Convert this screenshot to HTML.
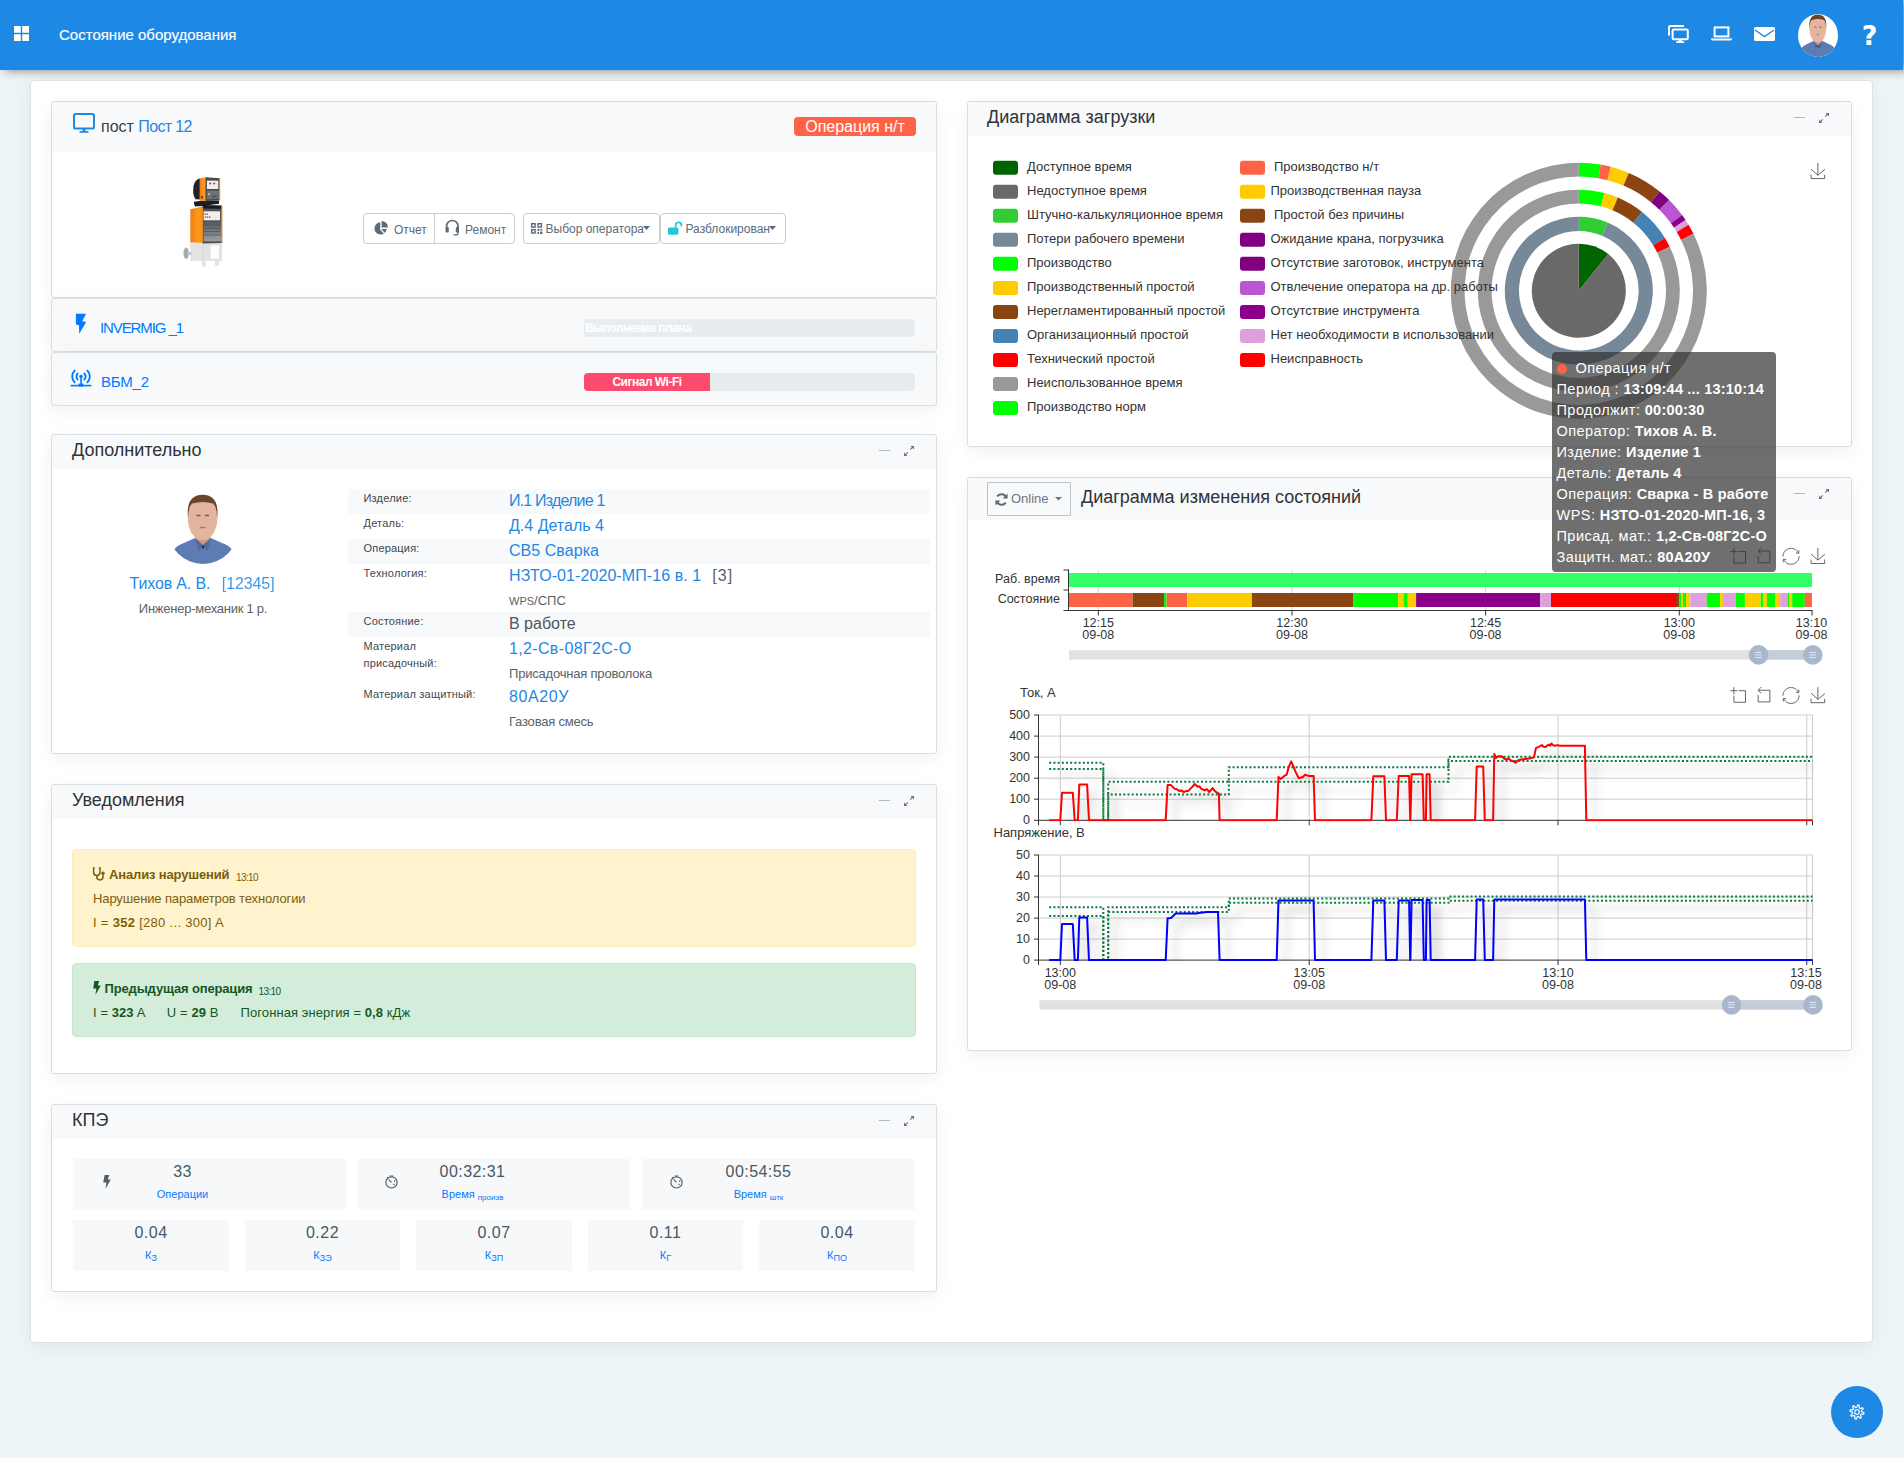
<!DOCTYPE html>
<html lang="ru"><head><meta charset="utf-8"><title>Состояние оборудования</title>
<style>
*{box-sizing:border-box;margin:0;padding:0}
html,body{width:1904px;height:1458px;overflow:hidden}
body{background:#eef5f9;font-family:"Liberation Sans",sans-serif;color:#54667a;font-size:13px;position:relative}
.abs,.abs *{position:absolute}
#hdr{position:absolute;left:0;top:0;width:1903px;height:70px;background:#1e88e5;box-shadow:5px 0 10px rgba(0,0,0,.5)}
#hdr .ttl{position:absolute;left:59px;top:25px;font-size:15px;line-height:20px;color:#fff;white-space:nowrap;-webkit-text-stroke:.15px #fff}
#wrap{position:absolute;left:30px;top:80px;width:1843px;height:1263px;background:#fff;border:1px solid #dbe3e8;border-radius:4px;box-shadow:0 4px 20px rgba(0,0,0,.06)}
.card{position:absolute;background:#fff;border:1px solid #d7dfe3;border-radius:3px;box-shadow:0 5px 18px rgba(0,0,0,.06)}
.card .ch{position:absolute;left:0;top:0;right:0;background:#f7f9fb;border-radius:3px 3px 0 0}
.card .ct{position:absolute;font-size:18px;line-height:22px;color:#2f3336;white-space:nowrap}
.t{position:absolute;white-space:nowrap}
a,.lnk{color:#007bff;text-decoration:none}
.ctl{position:absolute;top:0;right:0}
svg{position:absolute;overflow:visible}
.btn{position:absolute;top:213px;height:31px;border:1px solid #ccc;background:#fff;border-radius:4px;font-size:12px;color:#54667a}
.lbl{position:absolute;left:363px;font-size:12px;line-height:17px;color:#3a3f44}
.val{position:absolute;left:509px;font-size:16px;line-height:20px;white-space:nowrap}
.sub{position:absolute;left:509px;font-size:13px;line-height:16px;color:#5a6268;white-space:nowrap}
.stripe{position:absolute;left:348px;width:582px;height:25px;background:#f8f9fa}
.kbox{position:absolute;background:#f7f8fa}
.kv{position:absolute;left:0;right:0;text-align:center;font-size:16px;line-height:20px;color:#4a5560}
.kl{color:#007bff}
.kl sub{font-size:8px;vertical-align:baseline;position:relative;top:2px}
.ec{font-family:"Liberation Sans",sans-serif;font-size:12px;fill:#333}
</style></head><body>
<div id="hdr">
<svg style="left:14px;top:26px" width="15" height="15" viewBox="0 0 15 15"><path fill="#fff" d="M0 0h6.8v6.8H0zM8.2 0H15v6.8H8.2zM0 8.2h6.8V15H0zM8.2 8.2H15V15H8.2z"/></svg>
<div class="ttl">Состояние оборудования</div>
<svg style="left:1668px;top:25px" width="21" height="18" viewBox="0 0 21 18"><g fill="none" stroke="#fff" stroke-width="2"><path d="M1 10.5V2.2Q1 1 2.2 1H16"/><rect x="4.6" y="4.4" width="15.2" height="9.8" rx="1.2"/></g><path fill="#fff" d="M10.6 14.2h3.2v2h2.4v1.8H8.2v-1.8h2.4z"/></svg>
<svg style="left:1711px;top:26px" width="21" height="15" viewBox="0 0 21 15"><rect x="3.6" y="1.4" width="13.8" height="9" fill="none" stroke="#fff" stroke-width="2"/><path fill="#fff" d="M0 12.4h21v.6q0 1.6-1.8 1.6H1.8Q0 14.6 0 13z"/></svg>
<svg style="left:1754px;top:27px" width="21" height="14" viewBox="0 0 21 14"><rect x="0" y="0" width="21" height="14" rx="1.6" fill="#fff"/><path d="M1 3l9.5 6.6L20 3" fill="none" stroke="#1e88e5" stroke-width="1.3"/></svg>
<svg style="left:1798px;top:14px" width="40" height="43" viewBox="0 0 70 70" preserveAspectRatio="none"><defs><clipPath id="av1"><circle cx="35" cy="35" r="35"/></clipPath></defs><g clip-path="url(#av1)"><rect width="70" height="70" fill="#fff"/><path d="M0 70Q3 53 16 49L27 44l8 6 8-6 11 5Q67 53 70 70z" fill="#5c7cb3"/><path d="M27 36h15.5v9L35 53l-8-8z" fill="#cf9a82"/><ellipse cx="34.6" cy="24.5" rx="14.8" ry="21.8" fill="#e3b59e"/><path d="M20 24Q17.5 1 34.6 .8 51.7 1 49.2 24 48.6 12.5 45 9.6 35 6.6 24.2 9.6 20.6 12.5 20 24z" fill="#6a462d"/><path d="M28.5 21.500000000000004h4M37 21.500000000000004h4" stroke="#7a5a48" stroke-width="1.4"/><path d="M32 33.5h5.500000000000001" stroke="#b9736a" stroke-width="1.3"/><path d="M27 44l8 7-4.500000000000001 6zM43 44l-8 7 4.500000000000001 6z" fill="#4f6c9c"/><path d="M33.6 52.5l1.4 3 1.4-3-1.4-1.6z" fill="#232b45"/></g></svg>
<div class="t" style="left:1569.5px;width:600px;text-align:center;top:21.50px;font-size:27px;line-height:27px;color:#fff;font-weight:bold;font-family:'DejaVu Sans','Liberation Sans',sans-serif;">?</div>
</div>
<div id="wrap"></div>
<div class="card" style="left:51px;top:101px;width:886px;height:197px;"><div class="ch" style="height:50px"></div></div>
<svg style="left:73px;top:113px" width="22" height="20" viewBox="0 0 22 20"><rect x="1" y="1" width="20" height="14.6" rx="1.6" fill="none" stroke="#1e88e5" stroke-width="2"/><path fill="#1e88e5" d="M9.600000000000001 15.6h2.8v2.4h3v1.8H6.6v-1.8h3z"/></svg>
<div class="t" style="left:101px;top:118.50px;font-size:16px;line-height:16px;color:#3b3f44;">пост <span style="color:#1e88e5;letter-spacing:-.65px">Пост 12</span></div>
<div class="t" style="left:794px;top:117px;width:122px;height:19px;border-radius:4px;background:#ff6347"></div>
<div class="t" style="left:555px;width:600px;text-align:center;top:118.50px;font-size:16px;line-height:16px;color:#fff;">Операция н/т</div>
<svg style="left:0;top:0" width="260" height="280" viewBox="0 0 260 280">
<defs><linearGradient id="wg1" x1="0" x2="1"><stop offset="0" stop-color="#f07c10"/><stop offset=".6" stop-color="#fb9a1e"/><stop offset="1" stop-color="#f58a14"/></linearGradient><linearGradient id="wg2" x1="0" x2="0" y1="0" y2="1"><stop offset="0" stop-color="#54595d"/><stop offset="1" stop-color="#9a9fa3"/></linearGradient><filter id="wb" x="-5%" y="-5%" width="110%" height="110%"><feGaussianBlur stdDeviation=".35"/></filter></defs>
<g filter="url(#wb)">
<path d="M190.3 241.3h31.8v19.6h-3v4.2q-2.1 1.4-4.2 0v-4.2h-9.2v5.3q-2 1.4-3.900000000000001 0v-5.3H190.3z" fill="#e3e3e3"/>
<path d="M210.6 245.500000000000002h8.4v13.3h-8.4z" fill="#fdfdfd"/><path d="M203.2 242v18.6" stroke="#d3d3d3" stroke-width=".8"/>
<ellipse cx="186.2" cy="253.2" rx="2.7" ry="5.7" fill="#a9a9a9"/><path d="M187 253.5h4.500000000000001" stroke="#bdbdbd" stroke-width="2.4"/>
<path d="M190.3 209.2l13.3-2.9v36.8l-13.3-.9z" fill="url(#wg1)"/>
<path d="M202.9 205l19.2.6v37.4l-19.2.5z" fill="#4d5256"/><path d="M221.1 205.6h1.2v37h-1.2z" fill="#f5891a"/>
<path d="M203.6 205.3l17.5.5v3l-17.5-.3z" fill="#1c1d1f"/>
<path d="M203.6 211.3h16.4v9h-16.4z" fill="#f1f1f1"/><path d="M204.6 213.4h1.1v1.4h-1.1zM206.6 213.4h1.1v1.4h-1.1z" fill="#222"/><path d="M204.8 216.4h1.4v1.4h-1.4zM206.9 216.4h1.4v1.4h-1.4zM209 216.4h1.4v1.4h-1.4z" fill="#d11"/><path d="M213 215.5h5v3.5h-5z" fill="#f6e9c9"/>
<path d="M203.6 221.7h17.5v19.6h-17.5z" fill="url(#wg2)"/><path d="M204.2 225h16M204.2 228.3h16M204.2 231.6h16M204.2 234.9h16" stroke="#4b5054" stroke-width=".7"/><circle cx="217.6" cy="237.2" r="1.1" fill="#c9a23a"/>
<path d="M194 201.8q9-1.8 25-1.2v3.2l-13 1.8-2.3 2.400000000000001-1.4-2.1-7.300000000000001.5q-1.4-2.4-1-4.6z" fill="#1e1f21"/>
<path d="M193.2 190Q193 181.500000000000004 199 178.500000000000004l2 .5v20.5l-5.5-.2Q193 196 193.200000000000004 190z" fill="#222325"/>
<path d="M199.6 178.6l6.500000000000001-1.4v24l-6.500000000000001-.7z" fill="url(#wg1)"/><path d="M201.4 196h1.4v2.4h-1.4z" fill="#222"/>
<path d="M205.6 177.2l14.2 1v22l-14.2.8z" fill="#45494d"/><path d="M219 178.2l1.2.1v22l-1.2.1z" fill="#f5891a"/>
<path d="M206.9 180.6h11.4v8.4h-11.4z" fill="#eceef0"/><circle cx="210.2" cy="183.6" r="1" fill="#c22"/><circle cx="214.2" cy="183.6" r="1" fill="#c22"/>
<path d="M206.9 190.6h12v8.200000000000001l-12 .6z" fill="#6d7277"/><circle cx="208.9" cy="194" r="1.1" fill="#d9c07a"/><path d="M212 195.500000000000004h6" stroke="#b33" stroke-width=".9"/><path d="M212 196.9h4" stroke="#335" stroke-width=".7"/>
</g></svg>
<div class="btn" style="left:363px;width:152px"></div><div class="t" style="left:434px;top:214px;width:1px;height:29px;background:#ccc"></div>
<div class="btn" style="left:523px;width:137px"></div><div class="btn" style="left:660px;width:126px"></div>
<svg style="left:374px;top:221px" width="14" height="14" viewBox="0 0 14 14"><path fill="#5b6b7b" d="M6.3 1.2A6.2 6.2 0 1 0 12.8 8H6.3z"/><path fill="#5b6b7b" d="M7.6 0A6.3 6.3 0 0 1 14 6.6H7.6z"/><path d="M6.3 8l4.4 4.600000000000001" stroke="#fff" stroke-width="1.2"/></svg>
<div class="t" style="left:394px;top:224.00px;font-size:12px;line-height:12px;color:#5b6b7b;">Отчет</div>
<svg style="left:445px;top:219px" width="15" height="17" viewBox="0 0 15 17"><path d="M1.6 9.5V7.2a5.7 5.7 0 0 1 11.4 0v2.3" fill="none" stroke="#5b6b7b" stroke-width="1.7"/><rect x=".6" y="8" width="3.2" height="5.6" rx="1" fill="#5b6b7b"/><rect x="10.8" y="8" width="3.2" height="5.6" rx="1" fill="#5b6b7b"/><path d="M13 13v1.4q0 1.4-1.6 1.4H8.6" fill="none" stroke="#5b6b7b" stroke-width="1.3"/></svg>
<div class="t" style="left:465px;top:224.00px;font-size:12px;line-height:12px;color:#5b6b7b;">Ремонт</div>
<svg style="left:531px;top:223px" width="12" height="11" viewBox="0 0 12 11"><g fill="none" stroke="#5b6b7b" stroke-width="1.4"><rect x=".7" y=".7" width="3.4" height="3.4"/><rect x="7" y=".7" width="3.4" height="3.4"/><rect x=".7" y="6.6" width="3.4" height="3.4"/></g><path fill="#5b6b7b" d="M6.4 6h2v2h-2zM9.4 6h2v1.600000000000001h-2zM6.4 9h1.600000000000001v2H6.4zM9 8.6h2.400000000000001V11H9z"/></svg>
<div class="t" style="left:545.5px;top:223.00px;font-size:12px;line-height:12px;color:#5b6b7b;">Выбор оператора</div>
<svg style="left:643px;top:226px" width="7" height="4" viewBox="0 0 7 4"><path d="M0 0h7L3.5 4z" fill="#5b6b7b"/></svg>
<svg style="left:668px;top:221px" width="15" height="14" viewBox="0 0 15 14"><rect x="0" y="6.4" width="10.4" height="7.4" rx="1.2" fill="#26c6da"/><path d="M7.6 6.4V4.2a2.9 2.9 0 0 1 5.800000000000001 0V5.6" fill="none" stroke="#26c6da" stroke-width="1.7"/></svg>
<div class="t" style="left:685.5px;top:223.00px;font-size:12px;line-height:12px;color:#5b6b7b;">Разблокирован</div>
<svg style="left:769px;top:226px" width="7" height="4" viewBox="0 0 7 4"><path d="M0 0h7L3.5 4z" fill="#5b6b7b"/></svg>
<div class="card" style="left:51px;top:298px;width:886px;height:54px;background:#f7f9fb"></div>
<div class="card" style="left:51px;top:352px;width:886px;height:54px;background:#f7f9fb"></div>
<svg style="left:75px;top:313px" width="12" height="21" viewBox="0 0 12 21"><path fill="#007bff" d="M.9 .8H11.1L7.2 8.3l4 .7L4.2 20.8 4.05 12.3.9 11.6z"/></svg>
<div class="t" style="left:100px;top:320.00px;font-size:15px;line-height:15px;color:#007bff;letter-spacing:-1.1px;">INVERMIG _1</div>
<svg style="left:70px;top:368px" width="22" height="20" viewBox="0 0 22 20"><g fill="none" stroke="#007bff" stroke-width="1.9" stroke-linecap="round"><path d="M7.6 5.6a4.600000000000001 4.600000000000001 0 0 0 0 5.800000000000001M14.4 5.6a4.600000000000001 4.600000000000001 0 0 1 0 5.800000000000001M4.6 2.6a8.4 8.4 0 0 0 0 11.8M17.4 2.6a8.4 8.4 0 0 1 0 11.8"/></g><circle cx="11" cy="8.5" r="1.800000000000001" fill="#007bff"/><path d="M11 10v7" stroke="#007bff" stroke-width="1.6"/><rect x="8.6" y="15.600000000000001" width="4.8" height="3" fill="#007bff"/><path d="M.6 17.6h20.8" stroke="#007bff" stroke-width="1.6"/></svg>
<div class="t" style="left:101px;top:374.00px;font-size:15px;line-height:15px;color:#007bff;letter-spacing:-.25px;">ВБМ_2</div>
<div class="t" style="left:584px;top:319px;width:331px;height:18px;border-radius:4px;background:#e9ecef"></div>
<div class="t" style="left:585px;top:322.00px;font-size:12px;line-height:12px;color:#fff;font-weight:bold;letter-spacing:-.55px;">Выполнение плана</div>
<div class="t" style="left:584px;top:373px;width:331px;height:18px;border-radius:4px;background:#e9ecef"></div>
<div class="t" style="left:584px;top:373px;width:126px;height:18px;border-radius:4px 0 0 4px;background:#fc4b6c"></div>
<div class="t" style="left:347px;width:600px;text-align:center;top:376.00px;font-size:12px;line-height:12px;color:#fff;font-weight:bold;letter-spacing:-.5px;">Сигнал Wi-Fi</div>
<div class="card" style="left:51px;top:434px;width:886px;height:320px;"><div class="ch" style="height:34px"></div></div>
<div class="t" style="left:72px;top:441.00px;font-size:18px;line-height:18px;color:#2f3336;">Дополнительно</div>
<svg style="left:879px;top:444px" width="40" height="14" viewBox="0 0 40 14"><path d="M0 6.500000000000001h11" stroke="#b3b8bd" stroke-width="1" fill="none"/><path d="M31.2 5.7L34 2.9M28.8 8.3L26 11.1" stroke="#6c737a" stroke-width="1.1" fill="none"/><path d="M35 2v3.500000000000001L31.5 2zM25 12V8.5L28.5 12z" fill="#6c737a"/></svg>
<svg style="left:168px;top:494px" width="70" height="70" viewBox="0 0 70 70"><defs><clipPath id="av2"><circle cx="35" cy="35" r="35"/></clipPath></defs><g clip-path="url(#av2)"><rect width="70" height="70" fill="#fff"/><path d="M0 70Q3 53 16 49L27 44l8 6 8-6 11 5Q67 53 70 70z" fill="#5c7cb3"/><path d="M27 36h15.5v9L35 53l-8-8z" fill="#cf9a82"/><ellipse cx="34.6" cy="24.5" rx="14.8" ry="21.8" fill="#e3b59e"/><path d="M20 24Q17.5 1 34.6 .8 51.7 1 49.2 24 48.6 12.5 45 9.6 35 6.6 24.2 9.6 20.6 12.5 20 24z" fill="#6a462d"/><path d="M28.5 21.500000000000004h4M37 21.500000000000004h4" stroke="#7a5a48" stroke-width="1.4"/><path d="M32 33.5h5.500000000000001" stroke="#b9736a" stroke-width="1.3"/><path d="M27 44l8 7-4.500000000000001 6zM43 44l-8 7 4.500000000000001 6z" fill="#4f6c9c"/><path d="M33.6 52.5l1.4 3 1.4-3-1.4-1.6z" fill="#232b45"/></g></svg>
<div class="t" style="left:129.5px;top:575.50px;font-size:16px;line-height:16px;color:#1e88e5;letter-spacing:-.15px;">Тихов А. В.&nbsp; <span style="margin-left:3px;opacity:.85;letter-spacing:-.1px">[12345]</span></div>
<div class="t" style="left:-97px;width:600px;text-align:center;top:602.00px;font-size:13px;line-height:13px;color:#5a6268;letter-spacing:-.25px;">Инженер-механик 1 р.</div>
<div class="stripe" style="top:489px"></div>
<div class="stripe" style="top:539px"></div>
<div class="stripe" style="top:612px"></div>
<div class="t" style="left:363.5px;top:492.50px;font-size:11px;line-height:11px;color:#41474d;letter-spacing:.2px;">Изделие:</div>
<div class="t" style="left:363.5px;top:517.50px;font-size:11px;line-height:11px;color:#41474d;letter-spacing:.2px;">Деталь:</div>
<div class="t" style="left:363.5px;top:542.50px;font-size:11px;line-height:11px;color:#41474d;letter-spacing:.2px;">Операция:</div>
<div class="t" style="left:363.5px;top:567.50px;font-size:11px;line-height:11px;color:#41474d;letter-spacing:.2px;">Технология:</div>
<div class="t" style="left:363.5px;top:615.50px;font-size:11px;line-height:11px;color:#41474d;letter-spacing:.2px;">Состояние:</div>
<div class="t" style="left:363.5px;top:640.50px;font-size:11px;line-height:11px;color:#41474d;letter-spacing:.2px;">Материал</div>
<div class="t" style="left:363.5px;top:657.50px;font-size:11px;line-height:11px;color:#41474d;letter-spacing:.2px;">присадочный:</div>
<div class="t" style="left:363.5px;top:688.50px;font-size:11px;line-height:11px;color:#41474d;letter-spacing:.2px;">Материал защитный:</div>
<div class="t" style="left:509px;top:492.50px;font-size:16px;line-height:16px;color:#1e88e5;letter-spacing:-0.8px;">И.1 Изделие 1</div>
<div class="t" style="left:509px;top:517.50px;font-size:16px;line-height:16px;color:#1e88e5;letter-spacing:0px;">Д.4 Деталь 4</div>
<div class="t" style="left:509px;top:542.50px;font-size:16px;line-height:16px;color:#1e88e5;letter-spacing:0.05px;">СВ5 Сварка</div>
<div class="t" style="left:509px;top:567.50px;font-size:16px;line-height:16px;color:#1e88e5;letter-spacing:0.08px;">НЗТО-01-2020-МП-16 в. 1&nbsp; <span style="color:#5a6268;margin-left:2px;letter-spacing:1px">[3]</span></div>
<div class="t" style="left:509px;top:640.50px;font-size:16px;line-height:16px;color:#1e88e5;letter-spacing:0.35px;">1,2-Св-08Г2С-О</div>
<div class="t" style="left:509px;top:688.50px;font-size:16px;line-height:16px;color:#1e88e5;letter-spacing:0.6px;">80А20У</div>
<div class="t" style="left:509px;top:615.50px;font-size:16px;line-height:16px;color:#4f565c;">В работе</div>
<div class="t" style="left:509px;top:594.00px;font-size:13px;line-height:13px;color:#5a6268;"><span style="font-size:11px">WPS</span>/СПС</div>
<div class="t" style="left:509px;top:667.00px;font-size:13px;line-height:13px;color:#5a6268;letter-spacing:-.2px;">Присадочная проволока</div>
<div class="t" style="left:509px;top:715.00px;font-size:13px;line-height:13px;color:#5a6268;letter-spacing:-.2px;">Газовая смесь</div>
<div class="card" style="left:51px;top:784px;width:886px;height:290px;"><div class="ch" style="height:34px"></div></div>
<div class="t" style="left:72px;top:791.00px;font-size:18px;line-height:18px;color:#2f3336;">Уведомления</div>
<svg style="left:879px;top:794px" width="40" height="14" viewBox="0 0 40 14"><path d="M0 6.500000000000001h11" stroke="#b3b8bd" stroke-width="1" fill="none"/><path d="M31.2 5.7L34 2.9M28.8 8.3L26 11.1" stroke="#6c737a" stroke-width="1.1" fill="none"/><path d="M35 2v3.500000000000001L31.5 2zM25 12V8.5L28.5 12z" fill="#6c737a"/></svg>
<div class="t" style="left:72px;top:849px;width:844px;height:98px;border-radius:4px;background:#fff3cd;border:1px solid #ffeeba"></div>
<svg style="left:92px;top:867px" width="13" height="14" viewBox="0 0 13 14"><g fill="none" stroke="#7d5d08" stroke-width="1.5"><path d="M2.8 1H1.600000000000001v4.2a3.2 3.2 0 0 0 6.4 0V1H6.800000000000001"/><path d="M4.800000000000001 8.4v1.4a3.1 3.1 0 0 0 6.2 0V7.6"/></g><circle cx="11" cy="6.2" r="1.7" fill="#7d5d08"/></svg>
<div class="t" style="left:109px;top:868.00px;font-size:13px;line-height:13px;color:#7d5d08;font-weight:bold;letter-spacing:-.15px;">Анализ нарушений</div>
<div class="t" style="left:236px;top:872.50px;font-size:10px;line-height:10px;color:#7d5d08;letter-spacing:-.6px;">13:10</div>
<div class="t" style="left:93px;top:892.00px;font-size:13px;line-height:13px;color:#7d5d08;letter-spacing:-.12px;">Нарушение параметров технологии</div>
<div class="t" style="left:93px;top:916.00px;font-size:13px;line-height:13px;color:#7d5d08;letter-spacing:.3px;">I = <b>352</b> [280 ... 300] A</div>
<div class="t" style="left:72px;top:963px;width:844px;height:74px;border-radius:4px;background:#d4edda;border:1px solid #c3e6cb"></div>
<svg style="left:93px;top:981px" width="8" height="14" viewBox="0 0 8 14"><path fill="#155724" d="M1.4 0h4.800000000000001L4.800000000000001 4.6h3L2.4 14l1-6.4H.2z"/></svg>
<div class="t" style="left:104.5px;top:982.00px;font-size:13px;line-height:13px;color:#155724;font-weight:bold;letter-spacing:-.15px;">Предыдущая операция</div>
<div class="t" style="left:258.5px;top:986.50px;font-size:10px;line-height:10px;color:#155724;letter-spacing:-.6px;">13:10</div>
<div class="t" style="left:93px;top:1006.00px;font-size:13px;line-height:13px;color:#155724;letter-spacing:.08px;">I = <b>323</b> A &nbsp; &nbsp;&nbsp; U = <b>29</b> В &nbsp; &nbsp;&nbsp; Погонная энергия = <b>0,8</b> кДж</div>
<div class="card" style="left:51px;top:1104px;width:886px;height:188px;"><div class="ch" style="height:34px"></div></div>
<div class="t" style="left:72px;top:1111.00px;font-size:18px;line-height:18px;color:#2f3336;">КПЭ</div>
<svg style="left:879px;top:1114px" width="40" height="14" viewBox="0 0 40 14"><path d="M0 6.500000000000001h11" stroke="#b3b8bd" stroke-width="1" fill="none"/><path d="M31.2 5.7L34 2.9M28.8 8.3L26 11.1" stroke="#6c737a" stroke-width="1.1" fill="none"/><path d="M35 2v3.500000000000001L31.5 2zM25 12V8.5L28.5 12z" fill="#6c737a"/></svg>
<div class="kbox" style="left:73px;top:1159px;width:273px;height:51px"></div><div class="t" style="left:-117.5px;width:600px;text-align:center;top:1163.50px;font-size:16px;line-height:16px;color:#455a64;letter-spacing:.45px;">33</div><div class="t" style="left:-117.5px;width:600px;text-align:center;top:1188.50px;font-size:11px;line-height:11px;color:#007bff;">Операции</div>
<div class="kbox" style="left:358px;top:1159px;width:272px;height:51px"></div><div class="t" style="left:172.5px;width:600px;text-align:center;top:1163.50px;font-size:16px;line-height:16px;color:#455a64;letter-spacing:.45px;">00:32:31</div><div class="t" style="left:172.5px;width:600px;text-align:center;top:1188.50px;font-size:11px;line-height:11px;color:#007bff;">Время <span style="font-size:8px;position:relative;top:2px">произв</span></div>
<div class="kbox" style="left:642px;top:1159px;width:273px;height:51px"></div><div class="t" style="left:458.5px;width:600px;text-align:center;top:1163.50px;font-size:16px;line-height:16px;color:#455a64;letter-spacing:.45px;">00:54:55</div><div class="t" style="left:458.5px;width:600px;text-align:center;top:1188.50px;font-size:11px;line-height:11px;color:#007bff;">Время <span style="font-size:8px;position:relative;top:2px">штк</span></div>
<svg style="left:103px;top:1175px" width="8" height="14" viewBox="0 0 8 14"><path fill="#545f69" d="M1.600000000000001 0h4.6L4.800000000000001 4.6h3L2.4 14l1-6.4H.2z"/></svg>
<svg style="left:385.0px;top:1175px" width="13" height="14" viewBox="0 0 13 14"><circle cx="6.5" cy="7.4" r="5.6" fill="none" stroke="#545f69" stroke-width="1.2"/><path d="M6.5 7.4L3.600000000000001 4.4M4.6 1h3.8M2 3.4l1.2-1.2M10.4 5.6l-1.4.8M9.600000000000001 9.8l-1.2-.8" stroke="#545f69" stroke-width="1.1" fill="none"/></svg>
<svg style="left:669.5px;top:1175px" width="13" height="14" viewBox="0 0 13 14"><circle cx="6.5" cy="7.4" r="5.6" fill="none" stroke="#545f69" stroke-width="1.2"/><path d="M6.5 7.4L3.600000000000001 4.4M4.6 1h3.8M2 3.4l1.2-1.2M10.4 5.6l-1.4.8M9.600000000000001 9.8l-1.2-.8" stroke="#545f69" stroke-width="1.1" fill="none"/></svg>
<div class="kbox" style="left:73px;top:1220px;width:156px;height:51px"></div>
<div class="t" style="left:-149.0px;width:600px;text-align:center;top:1224.50px;font-size:16px;line-height:16px;color:#455a64;letter-spacing:.5px;">0.04</div>
<div class="t" style="left:-149.0px;width:600px;text-align:center;top:1249.50px;font-size:11px;line-height:11px;color:#007bff;">К<span style="font-size:9px;position:relative;top:2px">З</span></div>
<div class="kbox" style="left:245px;top:1220px;width:155px;height:51px"></div>
<div class="t" style="left:22.5px;width:600px;text-align:center;top:1224.50px;font-size:16px;line-height:16px;color:#455a64;letter-spacing:.5px;">0.22</div>
<div class="t" style="left:22.5px;width:600px;text-align:center;top:1249.50px;font-size:11px;line-height:11px;color:#007bff;">К<span style="font-size:9px;position:relative;top:2px">ЗЭ</span></div>
<div class="kbox" style="left:416px;top:1220px;width:156px;height:51px"></div>
<div class="t" style="left:194.0px;width:600px;text-align:center;top:1224.50px;font-size:16px;line-height:16px;color:#455a64;letter-spacing:.5px;">0.07</div>
<div class="t" style="left:194.0px;width:600px;text-align:center;top:1249.50px;font-size:11px;line-height:11px;color:#007bff;">К<span style="font-size:9px;position:relative;top:2px">ЗП</span></div>
<div class="kbox" style="left:588px;top:1220px;width:155px;height:51px"></div>
<div class="t" style="left:365.5px;width:600px;text-align:center;top:1224.50px;font-size:16px;line-height:16px;color:#455a64;letter-spacing:.5px;">0.11</div>
<div class="t" style="left:365.5px;width:600px;text-align:center;top:1249.50px;font-size:11px;line-height:11px;color:#007bff;">К<span style="font-size:9px;position:relative;top:2px">Г</span></div>
<div class="kbox" style="left:759px;top:1220px;width:156px;height:51px"></div>
<div class="t" style="left:537.0px;width:600px;text-align:center;top:1224.50px;font-size:16px;line-height:16px;color:#455a64;letter-spacing:.5px;">0.04</div>
<div class="t" style="left:537.0px;width:600px;text-align:center;top:1249.50px;font-size:11px;line-height:11px;color:#007bff;">К<span style="font-size:9px;position:relative;top:2px">ПО</span></div>
<div class="t" style="left:1831px;top:1386px;width:52px;height:52px;border-radius:26px;background:#1e88e5"></div>
<svg style="left:1849px;top:1404px" width="16" height="16" viewBox="-8 -8 16 16"><g fill="none" stroke="#fff" stroke-width="1.2" transform="rotate(12)"><circle r="2.3"/><path d="M4.53 -1.25 L6.97 -0.70 L6.97 0.70 L4.53 1.25L4.09 2.32 L5.42 4.43 L4.43 5.42 L2.32 4.09L1.25 4.53 L0.70 6.97 L-0.70 6.97 L-1.25 4.53L-2.32 4.09 L-4.43 5.42 L-5.42 4.43 L-4.09 2.32L-4.53 1.25 L-6.97 0.70 L-6.97 -0.70 L-4.53 -1.25L-4.09 -2.32 L-5.42 -4.43 L-4.43 -5.42 L-2.32 -4.09L-1.25 -4.53 L-0.70 -6.97 L0.70 -6.97 L1.25 -4.53L2.32 -4.09 L4.43 -5.42 L5.42 -4.43 L4.09 -2.32Z"/></g></svg>
<div class="card" style="left:967px;top:101px;width:885px;height:346px;"><div class="ch" style="height:34px"></div></div>
<div class="t" style="left:987px;top:108.00px;font-size:18px;line-height:18px;color:#2f3336;">Диаграмма загрузки</div>
<svg style="left:1794px;top:111px" width="40" height="14" viewBox="0 0 40 14"><path d="M0 6.500000000000001h11" stroke="#b3b8bd" stroke-width="1" fill="none"/><path d="M31.2 5.7L34 2.9M28.8 8.3L26 11.1" stroke="#6c737a" stroke-width="1.1" fill="none"/><path d="M35 2v3.500000000000001L31.5 2zM25 12V8.5L28.5 12z" fill="#6c737a"/></svg>
<svg style="left:0;top:0" width="1904" height="1458" viewBox="0 0 1904 1458"><path d="M1578.8 290.7L1578.80 243.70A47 47 0 0 1 1608.31 254.12Z" fill="#006400"/><path d="M1578.8 290.7L1608.31 254.12A47 47 0 1 1 1578.80 243.70Z" fill="#696969"/><path d="M1578.80 216.70A74 74 0 0 1 1607.71 222.58L1602.17 235.65A59.8 59.8 0 0 0 1578.80 230.90Z" fill="#32cd32"/><path d="M1607.71 222.58A74 74 0 1 1 1578.80 216.70L1578.80 230.90A59.8 59.8 0 1 0 1602.17 235.65Z" fill="#778899"/><path d="M1578.80 189.70A101 101 0 0 1 1604.43 193.01L1600.93 206.35A87.2 87.2 0 0 0 1578.80 203.50Z" fill="#00ff00"/><path d="M1604.43 193.01A101 101 0 0 1 1617.78 197.52L1612.45 210.25A87.2 87.2 0 0 0 1600.93 206.35Z" fill="#ffcc00"/><path d="M1617.78 197.52A101 101 0 0 1 1642.09 211.99L1633.44 222.74A87.2 87.2 0 0 0 1612.45 210.25Z" fill="#8b4513"/><path d="M1642.09 211.99A101 101 0 0 1 1664.92 237.93L1653.15 245.14A87.2 87.2 0 0 0 1633.44 222.74Z" fill="#4682b4"/><path d="M1664.92 237.93A101 101 0 0 1 1669.73 246.74L1657.31 252.75A87.2 87.2 0 0 0 1653.15 245.14Z" fill="#ff0000"/><path d="M1669.73 246.74A101 101 0 1 1 1578.80 189.70L1578.80 203.50A87.2 87.2 0 1 0 1657.31 252.75Z" fill="#999999"/><path d="M1578.80 162.70A128 128 0 0 1 1600.70 164.59L1598.34 178.18A114.2 114.2 0 0 0 1578.80 176.50Z" fill="#00ff00"/><path d="M1600.70 164.59A128 128 0 0 1 1610.85 166.78L1607.39 180.14A114.2 114.2 0 0 0 1598.34 178.18Z" fill="#ff6347"/><path d="M1610.85 166.78A128 128 0 0 1 1628.81 172.88L1623.42 185.58A114.2 114.2 0 0 0 1607.39 180.14Z" fill="#ffcc00"/><path d="M1628.81 172.88A128 128 0 0 1 1659.70 191.51L1650.98 202.20A114.2 114.2 0 0 0 1623.42 185.58Z" fill="#8b4513"/><path d="M1659.70 191.51A128 128 0 0 1 1669.15 200.03L1659.41 209.81A114.2 114.2 0 0 0 1650.98 202.20Z" fill="#800080"/><path d="M1669.15 200.03A128 128 0 0 1 1682.09 215.10L1670.95 223.25A114.2 114.2 0 0 0 1659.41 209.81Z" fill="#ba55d3"/><path d="M1682.09 215.10A128 128 0 0 1 1685.54 220.05L1674.03 227.67A114.2 114.2 0 0 0 1670.95 223.25Z" fill="#8b008b"/><path d="M1685.54 220.05A128 128 0 0 1 1688.52 224.78L1676.69 231.88A114.2 114.2 0 0 0 1674.03 227.67Z" fill="#dda0dd"/><path d="M1688.52 224.78A128 128 0 0 1 1693.45 233.79L1681.09 239.92A114.2 114.2 0 0 0 1676.69 231.88Z" fill="#ff0000"/><path d="M1693.45 233.79A128 128 0 1 1 1578.80 162.70L1578.80 176.50A114.2 114.2 0 1 0 1681.09 239.92Z" fill="#999999"/><rect x="993" y="160.7" width="25" height="14" rx="3" fill="#006400"/><text class="ec" x="1027" y="171.1" style="font-size:13px">Доступное время</text><rect x="993" y="184.7" width="25" height="14" rx="3" fill="#696969"/><text class="ec" x="1027" y="195.1" style="font-size:13px">Недоступное время</text><rect x="993" y="208.8" width="25" height="14" rx="3" fill="#32cd32"/><text class="ec" x="1027" y="219.2" style="font-size:13px">Штучно-калькуляционное время</text><rect x="993" y="232.8" width="25" height="14" rx="3" fill="#778899"/><text class="ec" x="1027" y="243.2" style="font-size:13px">Потери рабочего времени</text><rect x="993" y="256.8" width="25" height="14" rx="3" fill="#00ff00"/><text class="ec" x="1027" y="267.2" style="font-size:13px">Производство</text><rect x="993" y="280.9" width="25" height="14" rx="3" fill="#ffcc00"/><text class="ec" x="1027" y="291.2" style="font-size:13px">Производственный простой</text><rect x="993" y="304.9" width="25" height="14" rx="3" fill="#8b4513"/><text class="ec" x="1027" y="315.3" style="font-size:13px">Нерегламентированный простой</text><rect x="993" y="328.9" width="25" height="14" rx="3" fill="#4682b4"/><text class="ec" x="1027" y="339.3" style="font-size:13px">Организационный простой</text><rect x="993" y="352.9" width="25" height="14" rx="3" fill="#ff0000"/><text class="ec" x="1027" y="363.3" style="font-size:13px">Технический простой</text><rect x="993" y="377.0" width="25" height="14" rx="3" fill="#999999"/><text class="ec" x="1027" y="387.4" style="font-size:13px">Неиспользованное время</text><rect x="993" y="401.0" width="25" height="14" rx="3" fill="#00ff00"/><text class="ec" x="1027" y="411.4" style="font-size:13px">Производство норм</text><rect x="1240" y="160.7" width="25" height="14" rx="3" fill="#ff6347"/><text class="ec" x="1274" y="171.1" style="font-size:13px">Производство н/т</text><rect x="1240" y="184.7" width="25" height="14" rx="3" fill="#ffcc00"/><text class="ec" x="1270.5" y="195.1" style="font-size:13px">Производственная пауза</text><rect x="1240" y="208.8" width="25" height="14" rx="3" fill="#8b4513"/><text class="ec" x="1274" y="219.2" style="font-size:13px">Простой без причины</text><rect x="1240" y="232.8" width="25" height="14" rx="3" fill="#800080"/><text class="ec" x="1270.5" y="243.2" style="font-size:13px">Ожидание крана, погрузчика</text><rect x="1240" y="256.8" width="25" height="14" rx="3" fill="#800080"/><text class="ec" x="1270.5" y="267.2" style="font-size:13px">Отсутствие заготовок, инструмента</text><rect x="1240" y="280.9" width="25" height="14" rx="3" fill="#ba55d3"/><text class="ec" x="1270.5" y="291.2" style="font-size:13px">Отвлечение оператора на др. работы</text><rect x="1240" y="304.9" width="25" height="14" rx="3" fill="#8b008b"/><text class="ec" x="1270.5" y="315.3" style="font-size:13px">Отсутствие инструмента</text><rect x="1240" y="328.9" width="25" height="14" rx="3" fill="#dda0dd"/><text class="ec" x="1270.5" y="339.3" style="font-size:13px">Нет необходимости в использовании</text><rect x="1240" y="352.9" width="25" height="14" rx="3" fill="#ff0000"/><text class="ec" x="1270.5" y="363.3" style="font-size:13px">Неисправность</text><g transform="translate(0,-524.1)" fill="none" stroke="#666" stroke-width="1"><path vector-effect="non-scaling-stroke" transform="translate(1809.8,687.2) scale(.2764,.267)" d="M4.7,22.9L29.3,45.5L54.7,23.4M4.6,43.6L4.6,58L53.8,58L53.8,43.6M29.2,45.1L29.2,0"/></g></svg>
<div class="card" style="left:967px;top:477px;width:885px;height:574px;"><div class="ch" style="height:42px"></div></div>
<div class="t" style="left:987px;top:482px;width:84px;height:34px;border:1px solid #bfc3c7;border-radius:1px;background:#f8f9fa"></div>
<svg style="left:995px;top:492.5px" width="13" height="13" viewBox="0 0 13 13"><g fill="none" stroke="#5f6b75" stroke-width="2"><path d="M11.4 5A5.2 5.2 0 0 0 2.2 3.4M1.6 8a5.2 5.2 0 0 0 9.2 1.600000000000001"/></g><path fill="#5f6b75" d="M12.6 .6v5H7.6zM.4 12.4v-5h5z"/></svg>
<div class="t" style="left:1011px;top:492.00px;font-size:13px;line-height:13px;color:#6c757d;">Online</div>
<svg style="left:1055px;top:496.5px" width="7" height="4" viewBox="0 0 7 4"><path d="M0 0h7L3.5 3.6z" fill="#6c757d"/></svg>
<div class="t" style="left:1081px;top:488.00px;font-size:18px;line-height:18px;color:#2f3336;">Диаграмма изменения состояний</div>
<svg style="left:1794px;top:487px" width="40" height="14" viewBox="0 0 40 14"><path d="M0 6.500000000000001h11" stroke="#b3b8bd" stroke-width="1" fill="none"/><path d="M31.2 5.7L34 2.9M28.8 8.3L26 11.1" stroke="#6c737a" stroke-width="1.1" fill="none"/><path d="M35 2v3.500000000000001L31.5 2zM25 12V8.5L28.5 12z" fill="#6c737a"/></svg>
<svg style="left:0;top:0" width="1904" height="1458" viewBox="0 0 1904 1458"><defs><filter id="sh" x="-5%" y="-20%" width="110%" height="150%"><feDropShadow dx="9" dy="9" stdDeviation="4" flood-color="#000" flood-opacity=".22"/></filter></defs><path d="M1098.3 570V610" stroke="#d2d2d2" stroke-width="1"/><path d="M1292.0 570V610" stroke="#d2d2d2" stroke-width="1"/><path d="M1485.6 570V610" stroke="#d2d2d2" stroke-width="1"/><path d="M1679.3 570V610" stroke="#d2d2d2" stroke-width="1"/><rect x="1068.5" y="573" width="743.5" height="14" fill="#33ff66"/><rect x="1068.5" y="593" width="64.1" height="14" fill="#ff6347"/><rect x="1132.6" y="593" width="31.4" height="14" fill="#8b4513"/><rect x="1164" y="593" width="2.6" height="14" fill="#00ff00"/><rect x="1166.6" y="593" width="20.7" height="14" fill="#ff6347"/><rect x="1187.3" y="593" width="64.5" height="14" fill="#ffcc00"/><rect x="1251.8" y="593" width="101.3" height="14" fill="#8b4513"/><rect x="1353.1" y="593" width="44.9" height="14" fill="#00ff00"/><rect x="1398" y="593" width="5.5" height="14" fill="#ffcc00"/><rect x="1403.5" y="593" width="4.3" height="14" fill="#00ff00"/><rect x="1407.8" y="593" width="8.3" height="14" fill="#ffcc00"/><rect x="1416.1" y="593" width="124.0" height="14" fill="#8b008b"/><rect x="1540.1" y="593" width="10.9" height="14" fill="#dda0dd"/><rect x="1551" y="593" width="125.0" height="14" fill="#ff0000"/><rect x="1676" y="593" width="3.4" height="14" fill="#8b4513"/><rect x="1679.4" y="593" width="2.1" height="14" fill="#00ff00"/><rect x="1681.5" y="593" width="1.5" height="14" fill="#ffcc00"/><rect x="1683" y="593" width="3.0" height="14" fill="#00ff00"/><rect x="1686" y="593" width="4.3" height="14" fill="#ffcc00"/><rect x="1690.3" y="593" width="16.4" height="14" fill="#dda0dd"/><rect x="1706.7" y="593" width="13.4" height="14" fill="#00ff00"/><rect x="1720.1" y="593" width="2.8" height="14" fill="#ffcc00"/><rect x="1722.9" y="593" width="13.0" height="14" fill="#dda0dd"/><rect x="1735.9" y="593" width="9.0" height="14" fill="#00ff00"/><rect x="1744.9" y="593" width="15.8" height="14" fill="#ffcc00"/><rect x="1760.7" y="593" width="2.7" height="14" fill="#00ff00"/><rect x="1763.4" y="593" width="3.6" height="14" fill="#ffcc00"/><rect x="1767" y="593" width="8.4" height="14" fill="#00ff00"/><rect x="1775.4" y="593" width="4.8" height="14" fill="#ffcc00"/><rect x="1780.2" y="593" width="7.2" height="14" fill="#dda0dd"/><rect x="1787.4" y="593" width="1.6" height="14" fill="#00ff00"/><rect x="1789" y="593" width="3.2" height="14" fill="#ffcc00"/><rect x="1792.2" y="593" width="12.6" height="14" fill="#00ff00"/><rect x="1804.8" y="593" width="7.2" height="14" fill="#ff6347"/><path d="M1068.5 569.5V610.5M1063.5 570h5M1063.5 590h5M1063.5 610.5H1812.5" stroke="#333" stroke-width="1" fill="none"/><path d="M1098.3 610.5v5" stroke="#333" stroke-width="1"/><path d="M1292.0 610.5v5" stroke="#333" stroke-width="1"/><path d="M1485.6 610.5v5" stroke="#333" stroke-width="1"/><path d="M1679.3 610.5v5" stroke="#333" stroke-width="1"/><path d="M1812.0 610.5v5" stroke="#333" stroke-width="1"/><text class="ec" x="1060" y="582.8" text-anchor="end" style="font-size:12.5px">Раб. время</text><text class="ec" x="1060" y="603" text-anchor="end" style="font-size:12.5px">Состояние</text><text class="ec" x="1098.3" y="627" text-anchor="middle" style="font-size:12.5px">12:15</text><text class="ec" x="1098.3" y="639.2" text-anchor="middle" style="font-size:12.5px">09-08</text><text class="ec" x="1292" y="627" text-anchor="middle" style="font-size:12.5px">12:30</text><text class="ec" x="1292" y="639.2" text-anchor="middle" style="font-size:12.5px">09-08</text><text class="ec" x="1485.6" y="627" text-anchor="middle" style="font-size:12.5px">12:45</text><text class="ec" x="1485.6" y="639.2" text-anchor="middle" style="font-size:12.5px">09-08</text><text class="ec" x="1679.3" y="627" text-anchor="middle" style="font-size:12.5px">13:00</text><text class="ec" x="1679.3" y="639.2" text-anchor="middle" style="font-size:12.5px">09-08</text><text class="ec" x="1811.5" y="627" text-anchor="middle" style="font-size:12.5px">13:10</text><text class="ec" x="1811.5" y="639.2" text-anchor="middle" style="font-size:12.5px">09-08</text><rect x="1069" y="650.1999999999999" width="743" height="9.4" fill="#e2e2e2"/><rect x="1758.6" y="650.1999999999999" width="54.200000000000045" height="9.4" fill="#c5cdd9"/><circle cx="1758.6" cy="654.9" r="9.8" fill="#a7b7cc"/><path d="M1755.1 652.4h6.5M1755.1 654.9h6.5M1755.1 657.4h6.5" stroke="#e4e9f0" stroke-width="1"/><circle cx="1812.8" cy="654.9" r="9.8" fill="#a7b7cc"/><path d="M1809.3 652.4h6.5M1809.3 654.9h6.5M1809.3 657.4h6.5" stroke="#e4e9f0" stroke-width="1"/><g transform="translate(0,-139.2)" fill="none" stroke="#666" stroke-width="1"><path vector-effect="non-scaling-stroke" transform="translate(1730.4,687.2) scale(.2603)" d="M0,13.5h26.9M13.5,26.9V0M32.1,13.5H58V58H13.5V32.1"/><path vector-effect="non-scaling-stroke" transform="translate(1755.5,686.7) scale(.262)" d="M22,1.4L9.9,13.5l12.3,12.3M10.3,13.5H54.9v44.6H10.3v-26"/><path vector-effect="non-scaling-stroke" transform="translate(1782.4,687) scale(.2885,.2834)" d="M47,18.9h9.8V8.7M56.3,20.1C52.1,9,40.5,0.6,26.8,2.1C12.6,3.7,1.6,16.2,2.1,30.6M13,41.1H3.1v10.2M3.7,39.9c4.2,11.1,15.8,19.5,29.5,18c14.2-1.6,25.2-14.1,24.7-28.5"/><path vector-effect="non-scaling-stroke" transform="translate(1809.8,687.2) scale(.2764,.267)" d="M4.7,22.9L29.3,45.5L54.7,23.4M4.6,43.6L4.6,58L53.8,58L53.8,43.6M29.2,45.1L29.2,0"/></g><path d="M1039 715.0H1812.5" stroke="#ccc" stroke-width="1"/><path d="M1034 715.0h5" stroke="#333" stroke-width="1"/><text class="ec" x="1030" y="718.9" text-anchor="end" style="font-size:12.5px">500</text><path d="M1039 736.1H1812.5" stroke="#ccc" stroke-width="1"/><path d="M1034 736.1h5" stroke="#333" stroke-width="1"/><text class="ec" x="1030" y="740.0" text-anchor="end" style="font-size:12.5px">400</text><path d="M1039 757.1H1812.5" stroke="#ccc" stroke-width="1"/><path d="M1034 757.1h5" stroke="#333" stroke-width="1"/><text class="ec" x="1030" y="761.0" text-anchor="end" style="font-size:12.5px">300</text><path d="M1039 778.2H1812.5" stroke="#ccc" stroke-width="1"/><path d="M1034 778.2h5" stroke="#333" stroke-width="1"/><text class="ec" x="1030" y="782.1" text-anchor="end" style="font-size:12.5px">200</text><path d="M1039 799.2H1812.5" stroke="#ccc" stroke-width="1"/><path d="M1034 799.2h5" stroke="#333" stroke-width="1"/><text class="ec" x="1030" y="803.1" text-anchor="end" style="font-size:12.5px">100</text><path d="M1034 820.3h5" stroke="#333" stroke-width="1"/><text class="ec" x="1030" y="824.2" text-anchor="end" style="font-size:12.5px">0</text><path d="M1060.3 715V820.3" stroke="#ccc" stroke-width="1"/><path d="M1309.2 715V820.3" stroke="#ccc" stroke-width="1"/><path d="M1558 715V820.3" stroke="#ccc" stroke-width="1"/><path d="M1806.8 715V820.3" stroke="#ccc" stroke-width="1"/><path d="M1812.5 715V820.3" stroke="#ccc" stroke-width="1"/><path d="M1038.5 715V820.3H1812.5" stroke="#333" stroke-width="1" fill="none"/><path d="M1038.5 820.3v5" stroke="#333" stroke-width="1"/><path d="M1060.3 820.3v5" stroke="#333" stroke-width="1"/><path d="M1309.2 820.3v5" stroke="#333" stroke-width="1"/><path d="M1558 820.3v5" stroke="#333" stroke-width="1"/><path d="M1806.8 820.3v5" stroke="#333" stroke-width="1"/><path d="M1812.5 820.3v5" stroke="#333" stroke-width="1"/><text class="ec" x="1020" y="697.4" style="font-size:13px">Ток, А</text><clipPath id="cl715"><rect x="1038" y="714" width="776" height="107.5"/></clipPath><g clip-path="url(#cl715)"><g filter="url(#sh)"><path d="M1049.2 762.8L1103.3 762.8L1103.3 820.3L1108.2 820.3L1108.2 781.8L1228.8 781.8L1228.8 767.2L1448.5 767.2L1448.5 756.7L1812.5 756.7" fill="none" stroke="#0a7a3e" stroke-width="2" stroke-dasharray="2 2.2"/><path d="M1049.2 769.1L1103.3 769.1L1103.3 820.3L1108.2 820.3L1108.2 794.4L1228.8 794.4L1228.8 781.8L1448.5 781.8L1448.5 760.9L1812.5 760.9" fill="none" stroke="#0a7a3e" stroke-width="2" stroke-dasharray="2 2.2"/><path d="M1049.2 820.3L1060.3 820.3L1062.0 792.8L1072.8 792.8L1074.7 820.3L1077.9 820.3L1079.3 784.4L1087.1 784.4L1089.0 820.3L1165.7 820.3L1167.6 785.1L1171.0 785.1L1174.5 788.6L1176.8 789.3L1179.1 790.9L1181.4 790.4L1183.8 792.1L1186.1 791.1L1188.4 790.9L1191.8 787.4L1194.8 784.0L1197.6 786.7L1199.5 786.3L1201.1 788.6L1204.6 790.4L1206.9 789.1L1209.2 792.1L1212.6 788.1L1214.3 790.4L1216.1 792.1L1218.9 793.7L1219.6 820.3L1276.7 820.3L1278.5 777.0L1280.8 778.9L1284.3 775.9L1286.6 774.7L1288.9 766.6L1291.2 761.3L1293.5 766.6L1295.8 772.4L1298.8 778.2L1302.8 777.0L1305.1 774.7L1308.5 775.9L1313.6 775.9L1315.0 820.3L1371.4 820.3L1373.3 776.3L1384.4 776.3L1386.0 820.3L1396.8 820.3L1398.7 775.9L1409.1 775.9L1410.2 820.3L1410.4 820.3L1411.6 774.2L1422.6 774.2L1423.8 820.3L1425.9 820.3L1426.6 774.2L1429.6 774.2L1430.7 820.3L1475.1 820.3L1476.7 766.6L1483.2 766.6L1484.8 820.3L1493.1 820.3L1494.3 753.9L1495.9 758.0L1498.2 756.2L1501.7 756.2L1504.0 758.5L1506.3 759.7L1508.6 758.5L1510.9 760.4L1513.2 761.3L1515.6 762.7L1517.9 760.4L1520.2 759.7L1524.8 759.0L1529.4 758.5L1534.0 757.4L1535.9 748.1L1538.7 746.9L1540.3 746.0L1542.1 745.1L1543.7 746.9L1545.6 746.9L1547.4 745.5L1549.1 744.6L1550.2 745.8L1551.4 743.5L1553.0 745.1L1554.8 745.8L1557.6 745.1L1559.5 745.8L1584.9 745.8L1586.3 820.3L1812.5 820.3" fill="none" stroke="#ff0000" stroke-width="2" stroke-linejoin="round"/></g></g><path d="M1039 855.0H1812.5" stroke="#ccc" stroke-width="1"/><path d="M1034 855.0h5" stroke="#333" stroke-width="1"/><text class="ec" x="1030" y="858.9" text-anchor="end" style="font-size:12.5px">50</text><path d="M1039 876.0H1812.5" stroke="#ccc" stroke-width="1"/><path d="M1034 876.0h5" stroke="#333" stroke-width="1"/><text class="ec" x="1030" y="879.9" text-anchor="end" style="font-size:12.5px">40</text><path d="M1039 897.0H1812.5" stroke="#ccc" stroke-width="1"/><path d="M1034 897.0h5" stroke="#333" stroke-width="1"/><text class="ec" x="1030" y="900.9" text-anchor="end" style="font-size:12.5px">30</text><path d="M1039 918.1H1812.5" stroke="#ccc" stroke-width="1"/><path d="M1034 918.1h5" stroke="#333" stroke-width="1"/><text class="ec" x="1030" y="922.0" text-anchor="end" style="font-size:12.5px">20</text><path d="M1039 939.1H1812.5" stroke="#ccc" stroke-width="1"/><path d="M1034 939.1h5" stroke="#333" stroke-width="1"/><text class="ec" x="1030" y="943.0" text-anchor="end" style="font-size:12.5px">10</text><path d="M1034 960.1h5" stroke="#333" stroke-width="1"/><text class="ec" x="1030" y="964.0" text-anchor="end" style="font-size:12.5px">0</text><path d="M1060.3 855V960.1" stroke="#ccc" stroke-width="1"/><path d="M1309.2 855V960.1" stroke="#ccc" stroke-width="1"/><path d="M1558 855V960.1" stroke="#ccc" stroke-width="1"/><path d="M1806.8 855V960.1" stroke="#ccc" stroke-width="1"/><path d="M1812.5 855V960.1" stroke="#ccc" stroke-width="1"/><path d="M1038.5 855V960.1H1812.5" stroke="#333" stroke-width="1" fill="none"/><path d="M1038.5 960.1v5" stroke="#333" stroke-width="1"/><path d="M1060.3 960.1v5" stroke="#333" stroke-width="1"/><path d="M1309.2 960.1v5" stroke="#333" stroke-width="1"/><path d="M1558 960.1v5" stroke="#333" stroke-width="1"/><path d="M1806.8 960.1v5" stroke="#333" stroke-width="1"/><path d="M1812.5 960.1v5" stroke="#333" stroke-width="1"/><text class="ec" x="993.5" y="837.4" style="font-size:13px">Напряжение, В</text><clipPath id="cl855"><rect x="1038" y="854" width="776" height="107.3"/></clipPath><g clip-path="url(#cl855)"><g filter="url(#sh)"><path d="M1049.2 907.3L1103.3 907.3L1103.3 960.1L1108.2 960.1L1108.2 907.3L1228.8 907.3L1228.8 898.5L1448.5 898.5L1448.5 896.6L1812.5 896.6" fill="none" stroke="#0a7a3e" stroke-width="2" stroke-dasharray="2 2.2"/><path d="M1049.2 916.0L1103.3 916.0L1103.3 960.1L1108.2 960.1L1108.2 912.0L1228.8 912.0L1228.8 902.7L1448.5 902.7L1448.5 900.8L1812.5 900.8" fill="none" stroke="#0a7a3e" stroke-width="2" stroke-dasharray="2 2.2"/><path d="M1049.2 960.1L1060.3 960.1L1062.0 924.0L1072.8 924.0L1074.7 960.1L1077.9 960.1L1079.3 917.5L1087.1 917.5L1089.0 960.1L1165.7 960.1L1167.6 918.2L1171.0 918.0L1175.7 913.6L1196.5 913.6L1198.8 912.9L1206.9 911.9L1218.0 911.9L1219.6 960.1L1276.7 960.1L1278.5 900.4L1313.6 900.4L1315.0 960.1L1371.4 960.1L1373.3 900.4L1384.4 900.4L1386.0 960.1L1396.8 960.1L1398.7 900.4L1409.1 900.4L1410.2 960.1L1410.4 960.1L1411.6 899.9L1422.6 899.9L1423.8 960.1L1425.9 960.1L1426.6 899.9L1429.6 899.9L1430.7 960.1L1475.1 960.1L1476.7 899.4L1483.2 899.4L1484.8 960.1L1493.1 960.1L1494.3 899.4L1584.9 899.4L1586.3 960.1L1812.5 960.1" fill="none" stroke="#0000ff" stroke-width="2" stroke-linejoin="round"/></g></g><text class="ec" x="1060.3" y="977.2" text-anchor="middle" style="font-size:12.5px">13:00</text><text class="ec" x="1060.3" y="989.4000000000001" text-anchor="middle" style="font-size:12.5px">09-08</text><text class="ec" x="1309.2" y="977.2" text-anchor="middle" style="font-size:12.5px">13:05</text><text class="ec" x="1309.2" y="989.4000000000001" text-anchor="middle" style="font-size:12.5px">09-08</text><text class="ec" x="1558" y="977.2" text-anchor="middle" style="font-size:12.5px">13:10</text><text class="ec" x="1558" y="989.4000000000001" text-anchor="middle" style="font-size:12.5px">09-08</text><text class="ec" x="1806" y="977.2" text-anchor="middle" style="font-size:12.5px">13:15</text><text class="ec" x="1806" y="989.4000000000001" text-anchor="middle" style="font-size:12.5px">09-08</text><rect x="1039.5" y="1000.1999999999999" width="772.5" height="9.4" fill="#e2e2e2"/><rect x="1731.6" y="1000.1999999999999" width="81.40000000000009" height="9.4" fill="#c5cdd9"/><circle cx="1731.6" cy="1004.9" r="9.8" fill="#a7b7cc"/><path d="M1728.1 1002.4h6.5M1728.1 1004.9h6.5M1728.1 1007.4h6.5" stroke="#e4e9f0" stroke-width="1"/><circle cx="1813" cy="1004.9" r="9.8" fill="#a7b7cc"/><path d="M1809.5 1002.4h6.5M1809.5 1004.9h6.5M1809.5 1007.4h6.5" stroke="#e4e9f0" stroke-width="1"/><g transform="translate(0,0)" fill="none" stroke="#666" stroke-width="1"><path vector-effect="non-scaling-stroke" transform="translate(1730.4,687.2) scale(.2603)" d="M0,13.5h26.9M13.5,26.9V0M32.1,13.5H58V58H13.5V32.1"/><path vector-effect="non-scaling-stroke" transform="translate(1755.5,686.7) scale(.262)" d="M22,1.4L9.9,13.5l12.3,12.3M10.3,13.5H54.9v44.6H10.3v-26"/><path vector-effect="non-scaling-stroke" transform="translate(1782.4,687) scale(.2885,.2834)" d="M47,18.9h9.8V8.7M56.3,20.1C52.1,9,40.5,0.6,26.8,2.1C12.6,3.7,1.6,16.2,2.1,30.6M13,41.1H3.1v10.2M3.7,39.9c4.2,11.1,15.8,19.5,29.5,18c14.2-1.6,25.2-14.1,24.7-28.5"/><path vector-effect="non-scaling-stroke" transform="translate(1809.8,687.2) scale(.2764,.267)" d="M4.7,22.9L29.3,45.5L54.7,23.4M4.6,43.6L4.6,58L53.8,58L53.8,43.6M29.2,45.1L29.2,0"/></g></svg>
<div class="t" style="left:1552px;top:352px;width:224px;height:220px;border-radius:4px;background:rgba(50,50,50,.7)"></div><div class="t" style="left:1557px;top:363.5px;width:10px;height:10px;border-radius:5px;background:#ff6347"></div><div class="t" style="left:1575.5px;top:360.75px;font-size:14.5px;line-height:14.5px;color:#fff;letter-spacing:.45px;">Операция н/т</div><div class="t" style="left:1556.5px;top:381.75px;font-size:14.5px;line-height:14.5px;color:#fff;letter-spacing:.45px;">Период : <b style="letter-spacing:.2px">13:09:44 ... 13:10:14</b></div><div class="t" style="left:1556.5px;top:402.75px;font-size:14.5px;line-height:14.5px;color:#fff;letter-spacing:.45px;">Продолжит: <b style="letter-spacing:.2px">00:00:30</b></div><div class="t" style="left:1556.5px;top:423.75px;font-size:14.5px;line-height:14.5px;color:#fff;letter-spacing:.45px;">Оператор: <b style="letter-spacing:.2px">Тихов А. В.</b></div><div class="t" style="left:1556.5px;top:444.75px;font-size:14.5px;line-height:14.5px;color:#fff;letter-spacing:.45px;">Изделие: <b style="letter-spacing:.2px">Изделие 1</b></div><div class="t" style="left:1556.5px;top:465.75px;font-size:14.5px;line-height:14.5px;color:#fff;letter-spacing:.45px;">Деталь: <b style="letter-spacing:.2px">Деталь 4</b></div><div class="t" style="left:1556.5px;top:486.75px;font-size:14.5px;line-height:14.5px;color:#fff;letter-spacing:.45px;">Операция: <b style="letter-spacing:.2px">Сварка - В работе</b></div><div class="t" style="left:1556.5px;top:507.75px;font-size:14.5px;line-height:14.5px;color:#fff;letter-spacing:.45px;">WPS: <b style="letter-spacing:.2px">НЗТО-01-2020-МП-16, 3</b></div><div class="t" style="left:1556.5px;top:528.75px;font-size:14.5px;line-height:14.5px;color:#fff;letter-spacing:.45px;">Присад. мат.: <b style="letter-spacing:.2px">1,2-Св-08Г2С-О</b></div><div class="t" style="left:1556.5px;top:549.75px;font-size:14.5px;line-height:14.5px;color:#fff;letter-spacing:.45px;">Защитн. мат.: <b style="letter-spacing:.2px">80А20У</b></div>
</body></html>
